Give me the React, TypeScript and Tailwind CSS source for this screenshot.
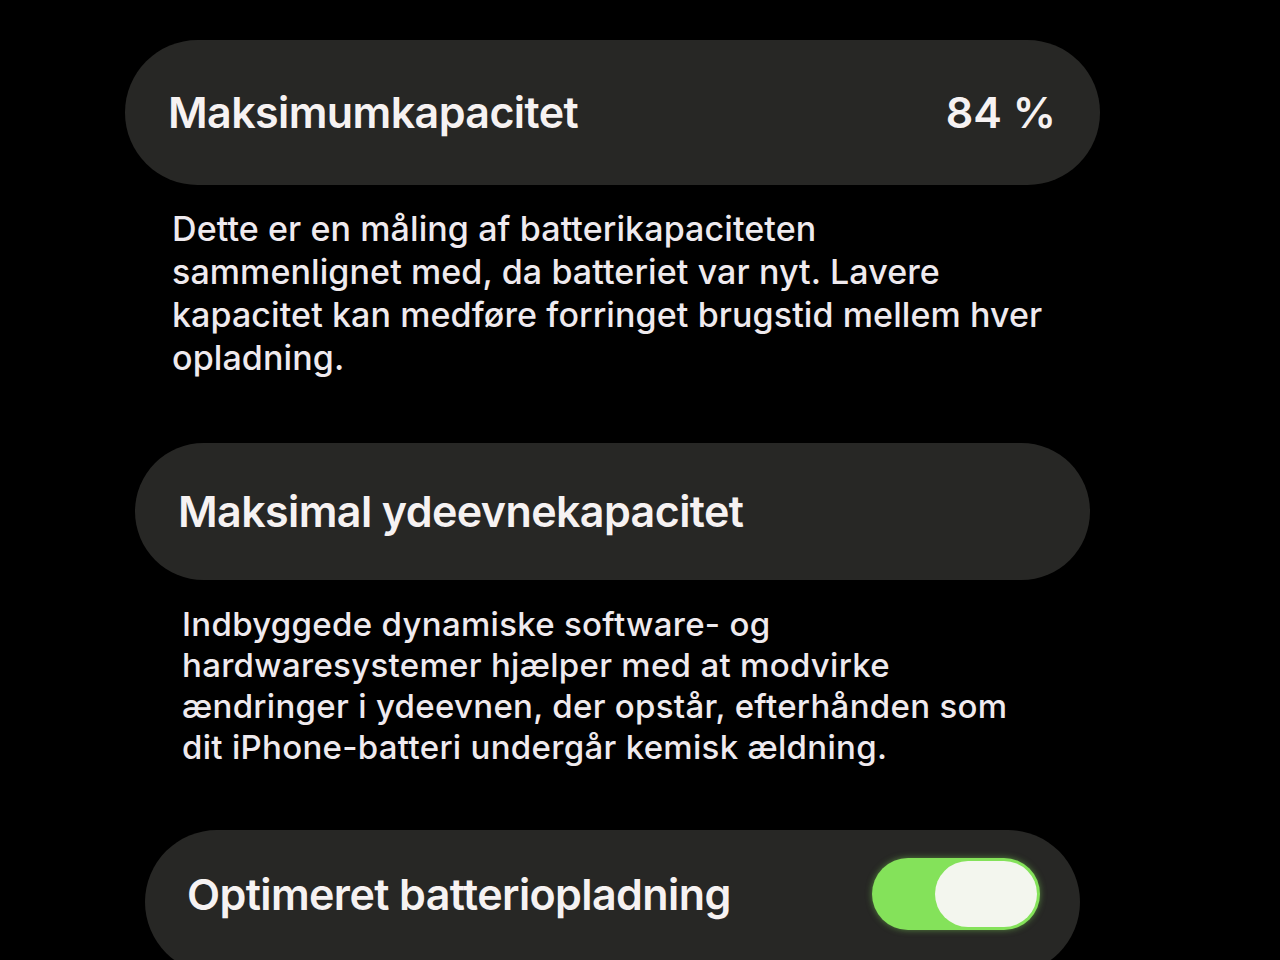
import React from "react";

const font = { fontFamily: "Inter, 'Noto Sans', sans-serif" };

function Row({
  className,
  title,
  right,
}: {
  className: string;
  title: string;
  right?: React.ReactNode;
}) {
  return (
    <div className={`flex items-center justify-between rounded-full bg-[#272725] ${className}`}>
      <span className="text-[43px] font-semibold tracking-[-0.6px] text-[#f6f2f2]">{title}</span>
      {right}
    </div>
  );
}

function Toggle() {
  return (
    <div className="flex h-[72px] w-[168px] items-center justify-end rounded-full bg-[#84e25a] p-[3px] shadow-[0_0_6px_rgba(132,226,90,0.5)]">
      <div className="h-[66px] w-[102px] rounded-full bg-[#f3f6ee]" />
    </div>
  );
}

export default function App() {
  return (
    <div className="h-[960px] w-[1280px] overflow-hidden bg-black" style={font}>
      <div className="flex flex-col">
        <Row
          className="ml-[125px] mt-[40px] h-[145px] w-[975px] pl-[43px] pr-[44px]"
          title="Maksimumkapacitet"
          right={<span className="text-[43px] font-semibold text-[#f6f2f2]">84 %</span>}
        />
        <p className="ml-[172px] mt-[22px] w-[900px] whitespace-nowrap text-[34px] font-medium leading-[43px] tracking-[0.1px] text-[#efeaee]">
          Dette er en måling af batterikapaciteten
          <br />
          sammenlignet med, da batteriet var nyt. Lavere
          <br />
          kapacitet kan medføre forringet brugstid mellem hver
          <br />
          opladning.
        </p>
        <Row
          className="ml-[135px] mt-[64px] h-[137px] w-[955px] pl-[43px] pr-[46px]"
          title="Maksimal ydeevnekapacitet"
        />
        <p className="ml-[182px] mt-[24px] w-[860px] whitespace-nowrap text-[33px] font-medium leading-[41px] tracking-[0.3px] text-[#efeaee]">
          Indbyggede dynamiske software- og
          <br />
          hardwaresystemer hjælper med at modvirke
          <br />
          ændringer i ydeevnen, der opstår, efterhånden som
          <br />
          dit iPhone-batteri undergår kemisk ældning.
        </p>
        <Row
          className="ml-[145px] mt-[62px] h-[144px] w-[935px] pb-[16px] pl-[42px] pr-[40px]"
          title="Optimeret batteriopladning"
          right={<Toggle />}
        />
      </div>
    </div>
  );
}
